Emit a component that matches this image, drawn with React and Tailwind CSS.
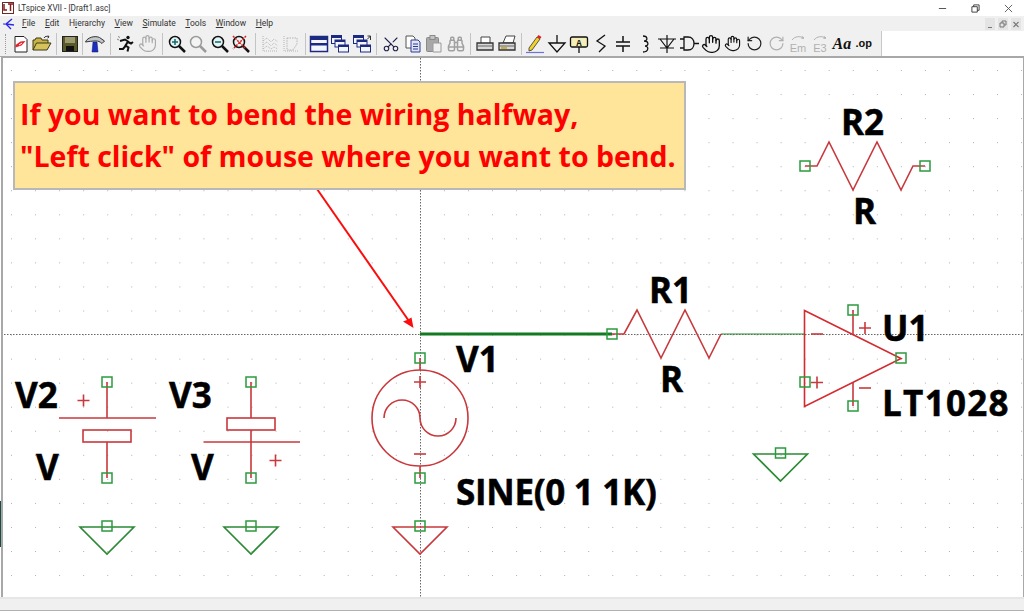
import React from "react";
import { Hand, Scissors, Binoculars, RotateCcw, RotateCw } from "lucide-react";

const FONT = "font-['Open_Sans',sans-serif]";
const UI_FONT = "font-['Roboto',sans-serif]";
const RED = "#c8383c";
const GREEN = "#2b9a3c";
const LINE = "1.600";

// toolbar icons, all on a 20x20 box
const Icon = ({ children }) => (
  <svg viewBox="0 0 20 20" className="w-5 h-5" fill="none">
    {children}
  </svg>
);

const NewIcon = () => (
  <Icon>
    <path d="M4 2.500h9l3 3v12.500H4z" fill="#fff" stroke="#222" />
    <path d="M4.500 11l5-3.500 5-.5-4 4.500-6 2z" fill="#e8202c" />
    <path d="M8 11l3-2" stroke="#fff" />
  </Icon>
);
const OpenIcon = () => (
  <Icon>
    <path d="M1 16V6h2l1-2h5l1 2h6v3" fill="#c9b24a" stroke="#3d3a14" />
    <path d="M1 16l3.500-7H19l-4 7z" fill="#d6c25c" stroke="#3d3a14" />
    <path d="M12 4c1-2 3-2 5-1M17 3l-1-1.500M17 3l-1.500 1" stroke="#333" />
  </Icon>
);
const SaveIcon = () => (
  <Icon>
    <rect x="2.500" y="2.500" width="15" height="15" fill="#5a5a28" stroke="#222" />
    <rect x="5" y="3" width="10" height="6" fill="#9c9c70" />
    <rect x="6" y="12" width="8" height="5" fill="#111" />
  </Icon>
);
const HammerIcon = () => (
  <Icon>
    <path d="M0.500 8c2-5 10-6.500 14-4.500l5 3.500-2.500 2.500c-2-2-4-2.500-6-2.500-4 0-7 .500-10.500 1z" fill="#c2c8cc" stroke="#333" />
    <path d="M8 8h4l1 10H7z" fill="#1a2fc0" stroke="#0c1660" strokeWidth="0.500" />
  </Icon>
);
const RunIcon = () => (
  <Icon>
    <circle cx="13" cy="3.500" r="1.700" fill="#111" />
    <path d="M5 7l5-1.500 3 2-2.500 4 3 2-1 4M10.500 12L8 15l-4 0M13 8l3 1.500 2-1.500" stroke="#111" strokeWidth="2" />
    <path d="M2 5l2 1M3 2.500l2 1" stroke="#888" />
  </Icon>
);
const ZoomIcon = ({ sign, muted, cross }) => {
  const c = muted ? "#9a9a9a" : "#111";
  return (
    <Icon>
      <circle cx="8" cy="8" r="5.500" fill={muted ? "#f4f4f4" : "#e4f4f4"} stroke={c} strokeWidth="1.500" />
      <path d="M12 12l6 6" stroke={c} strokeWidth="2.500" />
      {sign === "+" && <path d="M5 8h6M8 5v6" stroke="#116a70" strokeWidth="1.500" />}
      {sign === "-" && <path d="M5 8h6" stroke="#116a70" strokeWidth="1.500" />}
      {cross && <path d="M2 2l13 13M15 2L2 15" stroke="#e02020" strokeWidth="1.500" strokeDasharray="2 1" />}
    </Icon>
  );
};
const WaveIcon = ({ corner }) => (
  <Icon>
    <path d="M3 2v15h15" stroke="#b4b4b4" strokeDasharray="1 1" />
    {corner ? (
      <path d="M6 4h10v6l-4 6H6z" stroke="#b4b4b4" strokeDasharray="1.500 1" />
    ) : (
      <path d="M3 7l4-3 4 4 3-3 4 3M3 11l4-3 4 4 3-3 4 3M3 15l4-3 4 3 3-2 4 2" stroke="#b4b4b4" strokeDasharray="1 1" />
    )}
  </Icon>
);
const WinStack = () => (
  <Icon>
    <rect x="1.500" y="2.500" width="17" height="15" fill="#f4f6ff" stroke="#1c2a80" strokeWidth="1.500" />
    <rect x="1.500" y="2.500" width="17" height="3.500" fill="#1c2a80" />
    <rect x="1.500" y="9" width="17" height="2.500" fill="#1c2a80" />
  </Icon>
);
const WinCascade = ({ arrow }) => (
  <Icon>
    <rect x="1.500" y="1.500" width="10" height="8" fill="#f4f6ff" stroke="#1c2a80" />
    <rect x="1.500" y="1.500" width="10" height="2.500" fill="#1c2a80" />
    <rect x="5" y="6" width="10" height="7" fill="#f4f6ff" stroke="#1c2a80" />
    <rect x="5" y="6" width="10" height="2" fill="#1c2a80" />
    <rect x="8.500" y="11" width="10" height="7" fill="#f4f6ff" stroke="#1c2a80" />
    <rect x="8.500" y="11" width="10" height="2" fill="#1c2a80" />
    {arrow && <path d="M18.500 6V2h-3M18.500 2l-3 3" stroke="#333" />}
  </Icon>
);
const CopyIcon = () => (
  <Icon>
    <path d="M3 2h7l2 2v10H3z" fill="#fff" stroke="#555" />
    <path d="M8 6h7l2 2v10H8z" fill="#e0e4f8" stroke="#2c3a90" />
    <path d="M10 10h5M10 12.500h5M10 15h5" stroke="#2c3a90" />
  </Icon>
);
const PasteIcon = () => (
  <Icon>
    <rect x="2.500" y="3.500" width="12" height="14" rx="1" fill="#a8a8a8" stroke="#8a8a8a" />
    <rect x="6" y="1.500" width="5" height="4" fill="#c4c4c4" stroke="#8a8a8a" />
    <path d="M9 9h8v9H9z" fill="#f0f0f0" stroke="#9a9a9a" />
  </Icon>
);
const PrintIcon = ({ page }) => (
  <Icon>
    {page ? (
      <path d="M6 9l3-7h9l-2 7z" fill="#fff" stroke="#444" />
    ) : (
      <path d="M6 9V3h9v6" fill="#fff" stroke="#444" />
    )}
    <path d="M2 9h16v7H2z" fill="#d8d8d8" stroke="#333" strokeWidth="1.300" />
    <path d="M2 12h16" stroke="#666" />
    {page && <rect x="4" y="13" width="6" height="2" fill="#c8b040" />}
  </Icon>
);
const PencilIcon = () => (
  <Icon>
    <path d="M4 14L12 3l3 2-8 11-3 1z" fill="#f2d22a" stroke="#333" strokeWidth="0.800" />
    <path d="M12 3l1.500-2 3 2L15 5z" fill="#e02020" />
    <path d="M1 18.500h18" stroke="#6a72e0" strokeWidth="1.200" />
  </Icon>
);
const GroundIcon = () => (
  <Icon>
    <path d="M10 1v8M2 9h16l-8 9z" stroke="#111" strokeWidth="1.300" />
  </Icon>
);
const LabelIcon = () => (
  <Icon>
    <rect x="1.500" y="3" width="17" height="10" rx="1.500" fill="#f4eeb8" stroke="#111" strokeWidth="1.300" />
    <text x="10" y="11.500" textAnchor="middle" fontSize="9" fontWeight="700" fill="#111" fontFamily="'Liberation Mono', monospace">A</text>
    <path d="M10 13v6" stroke="#111" strokeWidth="1.300" />
  </Icon>
);
const ResIcon = () => (
  <Icon>
    <path d="M14 1L6 7l8 5-6 6" stroke="#111" strokeWidth="1.300" />
  </Icon>
);
const CapIcon = () => (
  <Icon>
    <path d="M10 2v6M3 8h14M3 12h14M10 12v6" stroke="#111" strokeWidth="1.500" />
  </Icon>
);
const IndIcon = () => (
  <Icon>
    <path d="M8 2c5 0 5 5 1 5 5 0 5 5 1 5 4 0 4 6-2 6" stroke="#111" strokeWidth="1.300" />
  </Icon>
);
const DiodeIcon = () => (
  <Icon>
    <path d="M10 1v18M1 5h18M3 5l7 9 7-9M3 14h14" stroke="#111" strokeWidth="1.200" />
  </Icon>
);
const GateIcon = () => (
  <Icon>
    <path d="M1 5h4M1 14h4M5 3h4c8 0 8 13 0 13H5zM15 9.500h5" stroke="#111" strokeWidth="1.300" />
  </Icon>
);
const HandOpen = ({ small }) => <Hand size={small ? 17 : 20} strokeWidth={1.600} color="#111" />;
const EditGray = ({ label }) => (
  <Icon>
    <path d="M4 6c3-4 8-4 12-2M16 4l-2-1.500M16 4l-2.500.500" stroke="#b0b0b0" />
    <text x="10" y="18" textAnchor="middle" fontSize="11" fill="#b0b0b0" fontFamily="'Liberation Sans', sans-serif">{label}</text>
  </Icon>
);
const TextIcon = () => (
  <span className="font-['Liberation_Serif',serif] text-[16px] font-bold italic leading-none text-[#111]">Aa</span>
);
const OpIcon = () => (
  <span className="font-['Liberation_Sans',sans-serif] text-[11px] font-bold leading-none text-[#111]">.op</span>
);

const Btn = ({ w = "w-[21.500px]", children }) => (
  <div className={`${w} h-full flex items-center justify-center shrink-0`}>{children}</div>
);

const Sep = ({ w }) => (
  <div className={`${w} h-full flex items-center justify-center shrink-0`}>
    <div className="w-px h-[22px] bg-[#c4c4c4]" />
  </div>
);

const MENU = [
  ["", "F", "ile"],
  ["", "E", "dit"],
  ["H", "i", "erarchy"],
  ["", "V", "iew"],
  ["", "S", "imulate"],
  ["", "T", "ools"],
  ["", "W", "indow"],
  ["", "H", "elp"],
];

const TitleBar = () => (
  <div className="h-4 bg-white flex items-center relative">
    <svg viewBox="0 0 12 12" className="w-3 h-3 ml-[2px]">
      <rect x="0.500" y="0.500" width="11" height="11" fill="#fff" stroke="#6b2a2a" />
      <path d="M2 2v6h3M6 2h5M8.500 2v7" stroke="#8a1a1a" strokeWidth="1.500" fill="none" />
    </svg>
    <span className={`${UI_FONT} ml-[4px] text-[8.200px] text-[#333]`}>LTspice XVII - [Draft1.asc]</span>
    <div className="ml-auto flex items-center h-full pr-[11px] gap-[24px]">
      <svg viewBox="0 0 10 10" className="w-[9px] h-[9px]"><path d="M1 5h8" stroke="#444" /></svg>
      <svg viewBox="0 0 10 10" className="w-[9px] h-[9px]" fill="none"><path d="M1 3h6v6H1zM3 3V1h6v6H7" stroke="#333" /></svg>
      <svg viewBox="0 0 10 10" className="w-[9px] h-[9px]"><path d="M1 1l8 8M9 1l-8 8" stroke="#555" /></svg>
    </div>
  </div>
);

const MenuBar = () => (
  <div className="h-[15px] bg-[#f0f0f0] flex items-center">
    <svg viewBox="0 0 12 12" className="w-3 h-3 ml-[3px]" fill="none">
      <path d="M9 1L3 6l8 1M3 6l5 5" stroke="#2a2ae8" strokeWidth="1.400" />
      <path d="M0 6h2" stroke="#2a2ae8" />
    </svg>
    <div className={`${UI_FONT} ml-[7px] flex gap-[9.600px] text-[8.500px] text-[#333]`}>
      {MENU.map(([a, u, b], i) => (
        <span key={i}>
          {a}
          <span className="underline">{u}</span>
          {b}
        </span>
      ))}
    </div>
    <div className="ml-auto flex items-center pr-[3px] gap-[3px]">
      <div className="w-[10px] h-[12px] bg-[#e4e4e4] flex items-end justify-center pb-[2px]">
        <div className="w-[4px] h-px bg-[#777]" />
      </div>
      <svg viewBox="0 0 10 12" className="w-[10px] h-[12px] bg-[#e4e4e4]" fill="none"><path d="M2 5h4v4H2zM4 5V3h4v4H6" stroke="#777" /></svg>
      <svg viewBox="0 0 10 12" className="w-[10px] h-[12px] bg-[#e4e4e4]"><path d="M2.500 4l5 5M7.500 4l-5 5" stroke="#777" strokeWidth="1.200" /></svg>
    </div>
  </div>
);

const Toolbar = () => (
  <div className="h-[26px] flex items-center bg-white border-b border-[#a8a8a8]">
    <div className="h-full flex items-center bg-[#f0f0f0] w-[882px] border-r border-[#c8c8c8]">
      <div className="w-[10px] h-full flex items-center justify-center shrink-0">
        <div className="w-px h-[20px] border-l border-dotted border-[#999]" />
      </div>
      <Btn><NewIcon /></Btn>
      <Btn><OpenIcon /></Btn>
      <Sep w="w-[6px]" />
      <Btn><SaveIcon /></Btn>
      <Sep w="w-[4px]" />
      <Btn><HammerIcon /></Btn>
      <Sep w="w-[8px]" />
      <Btn w="w-[22.500px]"><RunIcon /></Btn>
      <Btn w="w-[22.500px]"><Hand size={19} strokeWidth={1.500} color="#aaa" /></Btn>
      <Sep w="w-[7px]" />
      <Btn><ZoomIcon sign="+" /></Btn>
      <Btn><ZoomIcon muted /></Btn>
      <Btn><ZoomIcon sign="-" /></Btn>
      <Btn><ZoomIcon cross /></Btn>
      <Sep w="w-[7px]" />
      <Btn><WaveIcon /></Btn>
      <Btn><WaveIcon corner /></Btn>
      <Sep w="w-[6px]" />
      <Btn><WinStack /></Btn>
      <Btn><WinCascade /></Btn>
      <Btn><WinCascade arrow /></Btn>
      <Sep w="w-[8px]" />
      <Btn><Scissors size={18} strokeWidth={1.500} color="#22264a" className="-rotate-90" /></Btn>
      <Btn><CopyIcon /></Btn>
      <Btn><PasteIcon /></Btn>
      <Btn><Binoculars size={18} strokeWidth={2} color="#a0a0a0" /></Btn>
      <Sep w="w-[8px]" />
      <Btn><PrintIcon /></Btn>
      <Btn><PrintIcon page /></Btn>
      <Sep w="w-[7px]" />
      <Btn w="w-[21.900px]"><PencilIcon /></Btn>
      <Btn w="w-[21.900px]"><GroundIcon /></Btn>
      <Btn w="w-[21.900px]"><LabelIcon /></Btn>
      <Btn w="w-[21.900px]"><ResIcon /></Btn>
      <Btn w="w-[21.900px]"><CapIcon /></Btn>
      <Btn w="w-[21.900px]"><IndIcon /></Btn>
      <Btn w="w-[21.900px]"><DiodeIcon /></Btn>
      <Btn w="w-[21.900px]"><GateIcon /></Btn>
      <Btn w="w-[21.900px]"><HandOpen /></Btn>
      <Btn w="w-[21.900px]"><HandOpen small /></Btn>
      <Btn w="w-[21.900px]"><RotateCcw size={17} strokeWidth={1.700} color="#222" /></Btn>
      <Btn w="w-[21.900px]"><RotateCw size={17} strokeWidth={1.700} color="#b0b0b0" /></Btn>
      <Btn w="w-[21.900px]"><EditGray label="Em" /></Btn>
      <Btn w="w-[21.900px]"><EditGray label="E3" /></Btn>
      <Btn w="w-[21.900px]"><TextIcon /></Btn>
      <Btn w="w-[21.900px]"><OpIcon /></Btn>
    </div>
  </div>
);

// grid of the schematic sheet
const dots = [];
for (let r = 0; r < 22; r++) {
  for (let c = 0; c < 43; c++) {
    dots.push([11 + c * 24.05, 70 + r * 24.05]);
  }
}

// schematic pin
const Pin = ({ x, y }) => (
  <rect x={x - 5} y={y - 5} width="10" height="10" fill="none" stroke={GREEN} strokeWidth="1.500" />
);

const Ground = ({ x, y, color = "#2b8a34" }) => (
  <g>
    <path d={`M${x - 27} ${y}H${x + 27}L${x} ${y + 27}Z`} fill="none" stroke={color} strokeWidth={LINE} />
    <Pin x={x} y={y - 1} />
  </g>
);

const Plus = ({ x, y }) => <path d={`M${x - 6} ${y}h12M${x} ${y - 6}v12`} stroke={RED} strokeWidth={LINE} />;
const Minus = ({ x, y }) => <path d={`M${x - 6} ${y}h12`} stroke={RED} strokeWidth={LINE} />;

const Label = ({ x, y, spacing = 0, children }) => (
  <text
    x={x}
    y={y}
    fontFamily="'Open Sans', sans-serif"
    fontWeight="700"
    fontSize="35"
    letterSpacing={spacing}
    fill="#000"
    stroke="#000"
    strokeWidth="0.500"
  >
    {children}
  </text>
);

const Schematic = () => (
  <svg viewBox="0 57 1024 540" className="w-full h-full block" fill="none">
    {dots.map(([x, y], i) => (
      <rect key={i} x={x} y={y} width="1" height="1" fill="#b0b0b0" />
    ))}
    <rect x="0" y="501" width="1" height="46" fill="#1a4a44" />

    {/* crosshair */}
    <path d="M420.500 58V597M4 334.500H1024" stroke="#666" strokeDasharray="1.500 1.500" />

    {/* wires */}
    <path d="M420 334H612" stroke="#127a22" strokeWidth="3" />
    <path d="M721 334H805" stroke="#2b8a34" />

    {/* R1 and R2 */}
    <path d="M612 334H624L637 310L661 358L685 310L709 358L721 334" stroke={RED} strokeWidth={LINE} />
    <Pin x={612} y={334} />
    <path d="M805 166H817L829 142L853 190L877 142L901 190L913 166H925" stroke={RED} strokeWidth={LINE} />
    <Pin x={805} y={166} />
    <Pin x={925} y={166} />
    <Label x={841} y={135}>R2</Label>
    <Label x={853} y={224}>R</Label>
    <Label x={649} y={303}>R1</Label>
    <Label x={660} y={392}>R</Label>

    {/* V2 */}
    <path d="M107 382V418M59 418H156M107 442V478" stroke={RED} strokeWidth={LINE} />
    <rect x="83" y="430" width="48" height="12" stroke={RED} strokeWidth={LINE} />
    <Plus x={83.500} y={400.500} />
    <Pin x={107} y={382} />
    <Pin x={107} y={478} />
    <Ground x={107} y={527} />
    <Label x={15} y={408}>V2</Label>
    <Label x={36} y={480}>V</Label>

    {/* V3 */}
    <path d="M251 382V418M251 430V442M203.500 442H300M251 442V478" stroke={RED} strokeWidth={LINE} />
    <rect x="227" y="418" width="48" height="12" stroke={RED} strokeWidth={LINE} />
    <Plus x={275.500} y={460.500} />
    <Pin x={251} y={382} />
    <Pin x={251} y={478} />
    <Ground x={251} y={527} />
    <Label x={169} y={408}>V3</Label>
    <Label x={191} y={480}>V</Label>

    {/* V1 */}
    <circle cx="420" cy="418" r="48" stroke={RED} strokeWidth={LINE} />
    <path d="M420 358V370M420 466V478M384 418A18 18 0 0 1 420 418A18 18 0 0 0 456 418" stroke={RED} strokeWidth={LINE} />
    <Plus x={420} y={382} />
    <Minus x={420} y={454} />
    <Pin x={420} y={358} />
    <Pin x={420} y={478} />
    <Ground x={420} y={527} color={RED} />
    <Label x={456} y={372}>V1</Label>
    <Label x={456} y={505} spacing={-0.300}>SINE(0 1 1K)</Label>

    {/* U1 */}
    <path d="M804.500 310.500L901 358.500L804.500 406.500Z" stroke="#d42a30" strokeWidth={LINE} />
    <path d="M853 310V334M853 382V406" stroke={RED} strokeWidth={LINE} />
    <Plus x={865} y={328} />
    <Minus x={865} y={388} />
    <Minus x={817} y={334} />
    <Plus x={817} y={382.500} />
    <Pin x={853} y={310} />
    <Pin x={853} y={406} />
    <Pin x={805} y={382} />
    <Pin x={901} y={358} />
    <Ground x={780.500} y={454} />
    <Label x={882} y={341}>U1</Label>
    <Label x={882} y={416} spacing={1.300}>LT1028</Label>

    {/* pointer from the note */}
    <path d="M317 189L411 324" stroke="#fb0d0d" strokeWidth="2" />
    <path d="M413.500 328L403 321.500L407 320L411.500 317.500Z" fill="#fb0d0d" />
  </svg>
);

export default function App() {
  return (
    <div className="w-[1024px] h-[611px] flex flex-col overflow-hidden bg-white">
      <TitleBar />
      <MenuBar />
      <Toolbar />
      <div className="relative flex-1 min-h-0 border-l-2 border-t border-r border-[#a8a8a8] ml-px">
        <div className="absolute inset-y-0 -left-[3px] -right-px -top-px">
          <Schematic />
        </div>
        <div className={`${FONT} absolute left-[10px] top-[23px] w-[673px] h-[109px] border-2 border-[#b8b8b8] bg-[#fee599] pl-[5px] pt-[11px] text-[28.500px] leading-[41.500px] font-bold text-[#ff0000] whitespace-nowrap`}>
          <p>If you want to bend the wiring halfway,</p>
          <p>"Left click" of mouse where you want to bend.</p>
        </div>
      </div>
      <div className="h-[14px] bg-[#f0f0f0] border-b border-[#b0b0b0] border-t-2 border-t-[#e6e6e6]" />
    </div>
  );
}
